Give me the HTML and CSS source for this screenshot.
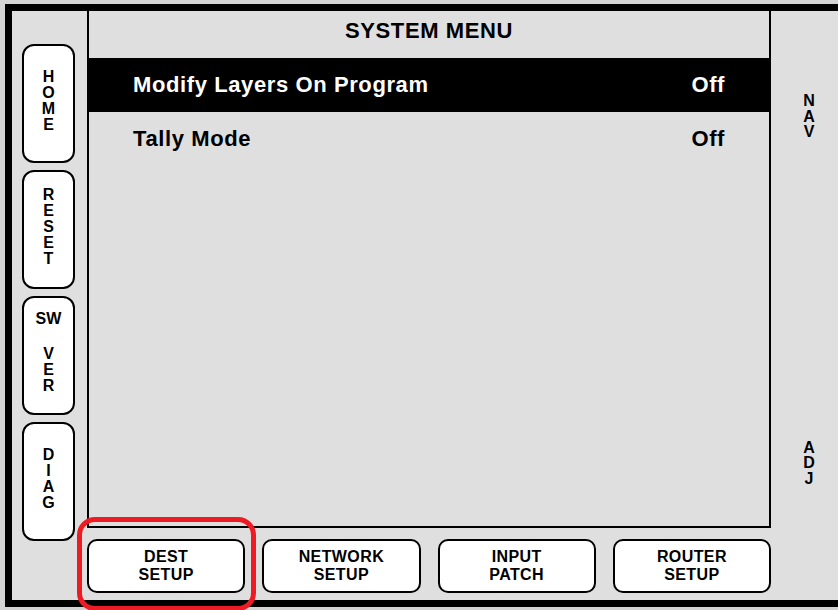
FILE: index.html
```html
<!DOCTYPE html>
<html lang="en">
  <head>
    <meta charset="UTF-8" />
    <title>System Menu</title>
    <link rel="stylesheet" href="styles.css">
  </head>
  <body>
    <div class="frame">
      <!-- left soft keys -->
      <div class="side-keys">
        <div class="side-key"><span>H</span><span>O</span><span>M</span><span>E</span></div>
        <div class="side-key"><span>R</span><span>E</span><span>S</span><span>E</span><span>T</span></div>
        <div class="side-key">
          <span>SW</span><span class="gap"></span><span>V</span><span>E</span><span>R</span>
        </div>
        <div class="side-key"><span>D</span><span>I</span><span>A</span><span>G</span></div>
      </div>

      <div class="main">
        <div class="panel">
          <div class="title">SYSTEM MENU</div>
          <div class="row selected">
            <span>Modify Layers On Program</span>
            <span>Off</span>
          </div>
          <div class="row">
            <span>Tally Mode</span>
            <span>Off</span>
          </div>
        </div>

        <!-- bottom soft keys -->
        <div class="bottom-keys">
          <div class="bottom-key"><span>DEST</span><span>SETUP</span></div>
          <div class="bottom-key"><span>NETWORK</span><span>SETUP</span></div>
          <div class="bottom-key"><span>INPUT</span><span>PATCH</span></div>
          <div class="bottom-key"><span>ROUTER</span><span>SETUP</span></div>
        </div>
      </div>

      <!-- knob labels -->
      <div class="knobs">
        <div class="knob nav"><span>N</span><span>A</span><span>V</span></div>
        <div class="knob adj"><span>A</span><span>D</span><span>J</span></div>
      </div>
    </div>

    <!-- highlight round the DEST SETUP key -->
    <div class="callout"></div>
  </body>
</html>
```

FILE: styles.css
```css
html, body {
  overflow: hidden;
}

body {
  margin: 0;
  width: 838px;
  height: 610px;
  background: #d4d4d4;
  font-family: "Liberation Sans", Arial, sans-serif;
  font-weight: bold;
  color: #000;
  position: relative;
}

/* outer black frame */
.frame {
  display: flex;
  width: 835px;
  height: 589px;
  margin: 4px 0 0 5px;
  border: 7px solid #000;
  border-right: none;
  background: #dfdfdf;
}

/* left keys */
.side-keys {
  width: 75px;
  flex: none;
  box-sizing: border-box;
  padding: 33px 0 0 10px;
  display: flex;
  flex-direction: column;
  gap: 7px;
}

.side-key {
  width: 53px;
  height: 119px;
  box-sizing: border-box;
  border: 2px solid #000;
  border-radius: 12px;
  background: #fff;
  display: flex;
  flex-direction: column;
  align-items: center;
  justify-content: center;
  padding-bottom: 6px;
  font-size: 16px;
  line-height: 16px;
}

.side-key .gap {
  height: 19px;
}

/* centre screen */
.main {
  width: 684px;
  flex: none;
}

.panel {
  height: 517px;
  box-sizing: border-box;
  border: 2px solid #000;
  border-top: none;
}

.title {
  height: 47px;
  box-sizing: border-box;
  padding-top: 9px;
  text-align: center;
  font-size: 22px;
  line-height: 22px;
  letter-spacing: 0.6px;
}

.row {
  height: 54px;
  display: flex;
  align-items: center;
  justify-content: space-between;
  padding: 0 44px;
  font-size: 22px;
  letter-spacing: 0.6px;
}

.row.selected {
  background: #000;
  color: #fff;
}

.bottom-keys {
  display: flex;
  gap: 17px;
  padding-top: 11px;
}

.bottom-key {
  flex: 1;
  height: 54px;
  box-sizing: border-box;
  border: 2px solid #000;
  border-radius: 10px;
  background: #fff;
  display: flex;
  flex-direction: column;
  align-items: center;
  justify-content: center;
  font-size: 16px;
  line-height: 18px;
  letter-spacing: 0.4px;
}

/* right side labels */
.knobs {
  width: 76px;
  flex: none;
  text-align: center;
  font-size: 16px;
  line-height: 15.5px;
}

.knob span {
  display: block;
}

.nav {
  padding-top: 82px;
}

.adj {
  margin-top: 300px;
}

.callout {
  position: absolute;
  left: 77px;
  top: 517px;
  width: 179px;
  height: 94px;
  box-sizing: border-box;
  border: 5px solid #ed1c24;
  border-radius: 18px;
}
```
